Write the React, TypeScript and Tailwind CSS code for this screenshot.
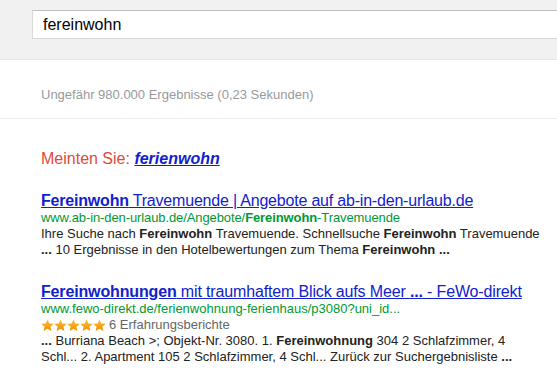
import React from "react";

const font = { fontFamily: '"Liberation Sans", Arial, sans-serif' };

function Star() {
  return (
    <svg width="13" height="13" viewBox="0 0 24 24">
      <defs>
        <linearGradient id="sg" x1="0" y1="0" x2="0" y2="1">
          <stop offset="0" stopColor="#ffc233" />
          <stop offset="1" stopColor="#f08c00" />
        </linearGradient>
      </defs>
      <path d="M12 0.8l3.4 7.3 8 .8-6 5.4 1.8 7.9L12 18.1l-7.2 4.1 1.8-7.9-6-5.4 8-.8z" fill="url(#sg)" />
    </svg>
  );
}

export default function App() {
  return (
    <div className="w-[557px] h-[385px] overflow-hidden bg-white text-[#222]" style={font}>
      <div className="h-[60px] bg-[#f1f1f1] border-b border-[#e5e5e5] pt-[10px] pl-[32px]">
        <div className="h-[29px] bg-white border border-[#d9d9d9] border-t-[#c0c0c0] border-r-0 flex items-center pl-[10px] text-[16px] text-black">
          fereinwohn
        </div>
      </div>

      <div className="h-[59px] border-b border-[#ebebeb] pl-[41px] pt-[25px] text-[13px] text-[#999]">
        Ungefähr 980.000 Ergebnisse (0,23 Sekunden)
      </div>

      <div className="pl-[41px] pt-[30px]">
        <div className="text-[16px] leading-[19px] text-[#dd4b39]">
          Meinten Sie:{" "}
          <span className="font-bold italic text-[#1122cc] underline">ferienwohn</span>
        </div>

        <div className="mt-[23px]">
          <div className="text-[16px] leading-[19px] tracking-[-0.2px] text-[#1122cc] underline whitespace-nowrap">
            <span className="font-bold">Fereinwohn</span> Travemuende | Angebote auf ab-in-den-urlaub.de
          </div>
          <div className="text-[13px] leading-[16px] tracking-[-0.1px] text-[#009933] whitespace-nowrap">
            www.ab-in-den-urlaub.de/Angebote/<b>Fereinwohn</b>-Travemuende
          </div>
          <div className="text-[13px] leading-[16px] whitespace-nowrap">
            Ihre Suche nach <b>Fereinwohn</b> Travemuende. Schnellsuche <b>Fereinwohn</b> Travemuende
          </div>
          <div className="text-[13px] leading-[16px] whitespace-nowrap">
            <b>...</b> 10 Ergebnisse in den Hotelbewertungen zum Thema <b>Fereinwohn ...</b>
          </div>
        </div>

        <div className="mt-[24px]">
          <div className="text-[16px] leading-[19px] tracking-[-0.15px] text-[#1122cc] underline whitespace-nowrap">
            <span className="font-bold">Fereinwohnungen</span> mit traumhaftem Blick aufs Meer <b>...</b> - FeWo-direkt
          </div>
          <div className="text-[13px] leading-[16px] text-[#009933] whitespace-nowrap">
            www.fewo-direkt.de/ferienwohnung-ferienhaus/p3080?uni_id...
          </div>
          <div className="flex items-center h-[16px] text-[13px] text-[#666] whitespace-nowrap">
            <Star />
            <Star />
            <Star />
            <Star />
            <Star />
            <span className="ml-[3px]">6 Erfahrungsberichte</span>
          </div>
          <div className="text-[13px] leading-[16px] whitespace-nowrap">
            <b>...</b> Burriana Beach &gt;; Objekt-Nr. 3080. 1. <b>Fereinwohnung</b> 304 2 Schlafzimmer, 4
          </div>
          <div className="text-[13px] leading-[16px] whitespace-nowrap">
            Schl... 2. Apartment 105 2 Schlafzimmer, 4 Schl... Zurück zur Suchergebnisliste <b>...</b>
          </div>
        </div>
      </div>
    </div>
  );
}
